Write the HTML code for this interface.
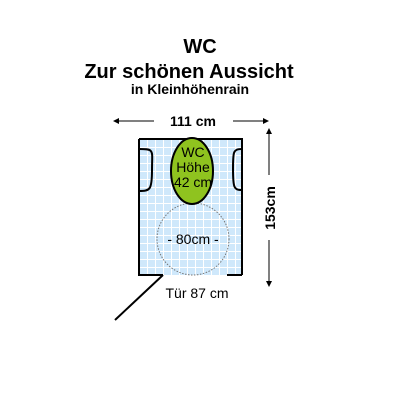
<!DOCTYPE html>
<html><head><meta charset="utf-8"><style>
html,body{margin:0;padding:0;background:#fff;width:400px;height:414px;overflow:hidden}
</style></head><body>
<svg width="400" height="414" xmlns="http://www.w3.org/2000/svg" font-family="Liberation Sans, Arial, sans-serif" font-weight="bold">
<defs>
<pattern id="g" x="139" y="139" width="8" height="8" patternUnits="userSpaceOnUse">
<rect width="8" height="8" fill="#cfe8fb"/>
<path d="M0 0.5H8M0.5 0V8" stroke="#fff" stroke-width="1"/>
</pattern>
</defs>
<text x="200" y="53" font-size="20" text-anchor="middle">WC</text>
<text x="189" y="78" font-size="20" text-anchor="middle">Zur schönen Aussicht</text>
<text x="190" y="94" font-size="14" text-anchor="middle">in Kleinhöhenrain</text>
<text x="193" y="126" font-size="14" text-anchor="middle">111 cm</text>
<path d="M115 121H154M233 121H267" stroke="#000" stroke-width="1"/>
<path d="M113 121l6-3v6z M269 121l-6-3v6z" fill="#000"/>
<rect x="139" y="139" width="103" height="136" fill="url(#g)"/>
<path d="M139 139H242V275 M139 139V275H163 M227 275H242" fill="none" stroke="#000" stroke-width="2"/>
<path d="M139 149C155 149 152 150 152 170C152 190 150 191 139 191" fill="none" stroke="#000" stroke-width="2"/>
<path d="M242 149C233 149 233 152 233 169C233 188 234 190 242 190" fill="none" stroke="#000" stroke-width="2"/>
<circle cx="193" cy="239" r="36" fill="none" stroke="#777" stroke-width="1" stroke-dasharray="1.5 1.5"/>
<ellipse cx="192" cy="171" rx="21" ry="33" fill="#8fc31f" stroke="#000" stroke-width="2"/>
<text x="193" y="157" font-size="14" font-weight="normal" text-anchor="middle">WC</text>
<text x="193" y="172" font-size="14" font-weight="normal" text-anchor="middle">Höhe</text>
<text x="193" y="187" font-size="14" font-weight="normal" text-anchor="middle">42 cm</text>
<text x="193" y="244" font-size="14" font-weight="normal" text-anchor="middle">- 80cm -</text>
<path d="M163 275L115 320" stroke="#000" stroke-width="2"/>
<text x="197" y="298" font-size="14" font-weight="normal" text-anchor="middle">Tür 87 cm</text>
<path d="M269 130V175M269 240V285" stroke="#000" stroke-width="1"/>
<path d="M269 128l-3 6h6z M269 287l-3-6h6z" fill="#000"/>
<text transform="translate(275 208) rotate(-90)" font-size="14" text-anchor="middle">153cm</text>
</svg>
</body></html>
